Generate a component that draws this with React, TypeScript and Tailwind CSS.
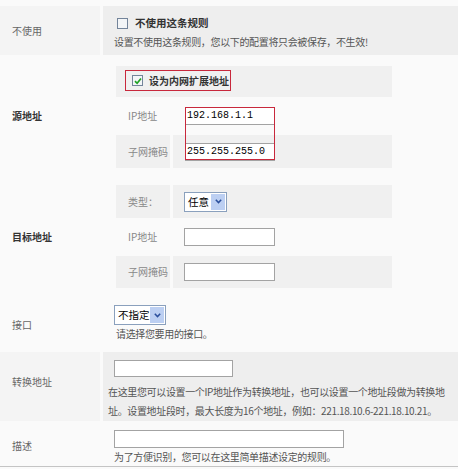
import type { ReactNode } from "react";

function Checkbox({ checked }: { checked?: boolean }) {
  return (
    <span className="inline-flex w-[11px] h-[11px] shrink-0 items-center justify-center border border-[#73849a] bg-[#f3f5f7]">
      {checked && (
        <svg width="8" height="8" viewBox="0 0 8 8">
          <path d="M1 4.2 L3.1 6.3 L7 1.5" stroke="#1fa224" strokeWidth="1.7" fill="none" />
        </svg>
      )}
    </span>
  );
}

function Select({ text, className }: { text: string; className: string }) {
  return (
    <div className={`flex items-center h-[20px] border border-[#8aa0bd] bg-white ${className}`}>
      <span className="pl-[3px] text-[10.5px] leading-[12px] text-black">{text}</span>
      <span className="ml-auto mr-[1px] w-[14px] h-[16px] flex items-center justify-center bg-[#bccff2]">
        <svg width="7" height="5" viewBox="0 0 7 5">
          <path d="M0.8 0.8 L3.5 3.6 L6.2 0.8" stroke="#2b4f9c" strokeWidth="1.5" fill="none" />
        </svg>
      </span>
    </div>
  );
}

function Input({ className, value }: { className: string; value?: string }) {
  return (
    <div
      className={`flex items-center border border-[#a3a3a3] bg-white pl-[1px] font-['Liberation_Mono',monospace] text-[10px] text-black ${className}`}
    >
      {value}
    </div>
  );
}

function SubRow({
  label,
  gray,
  className,
  children,
}: {
  label: string;
  gray?: boolean;
  className: string;
  children: ReactNode;
}) {
  return (
    <div className={`flex ${className}`}>
      <div className={`w-[54px] pl-[12px] flex items-center text-[#888] ${gray ? "bg-[#f0f0f0]" : ""}`}>
        {label}
      </div>
      <div className={`flex-1 ml-[3px] pl-[11px] flex items-center ${gray ? "bg-[#f0f0f0]" : ""}`}>
        {children}
      </div>
    </div>
  );
}

export default function App() {
  return (
    <div className='w-[458px] h-[469px] bg-[#fafafa] pt-[6px] text-[10px] leading-[12px] text-[#666] font-["Noto_Sans_CJK_SC",sans-serif]'>
      {/* 不使用 */}
      <div className="flex h-[49px]">
        <div className="w-[100px] bg-[#f4f4f4] pl-[12px] flex items-center">不使用</div>
        <div className="flex-1 ml-[3px] bg-[#eeeeee] pl-[11px] pt-[11px]">
          <div className="flex items-center gap-[7px] pl-[3px] h-[12px]">
            <Checkbox />
            <span className="font-bold text-[#333] text-[10.5px]">不使用这条规则</span>
          </div>
          <div className="mt-[7px] text-[#555] tracking-[-0.35px]">
            设置不使用这条规则，您以下的配置将只会被保存，不生效!
          </div>
        </div>
      </div>

      {/* 源地址 */}
      <div className="flex h-[119px]">
        <div className="w-[100px] pl-[12px] pt-[55px] font-bold text-[#333]">源地址</div>
        <div className="ml-[3px] pl-[13px] pt-[11px]">
          <div className="relative w-[276px]">
            <div className="h-[31px] bg-[#f0f0f0] pt-[4px] pl-[9px]">
              <div className="flex items-center h-[21px] w-[106px] border border-[#c8283c] pl-[6px] gap-[6px]">
                <Checkbox checked />
                <span className="font-bold text-[#333]">设为内网扩展地址</span>
              </div>
            </div>
            <SubRow label="IP地址" className="h-[38px]">
              <Input className="w-[90px] h-[18px] ml-[1px]" value="192.168.1.1" />
            </SubRow>
            <SubRow label="子网掩码" gray className="h-[33px]">
              <Input className="w-[90px] h-[18px] ml-[1px]" value="255.255.255.0" />
            </SubRow>
            {/* highlight annotation over both inputs */}
            <div className="absolute left-[69px] top-[41px] w-[90px] h-[53px] border border-[#c8283c]" />
          </div>
        </div>
      </div>

      {/* 目标地址 */}
      <div className="flex h-[116px]">
        <div className="w-[100px] pl-[12px] pt-[57px] font-bold text-[#333]">目标地址</div>
        <div className="ml-[3px] pl-[13px] pt-[11px]">
          <div className="w-[276px]">
            <SubRow label="类型：" gray className="h-[33px]">
              <Select text="任意" className="w-[43px]" />
            </SubRow>
            <SubRow label="IP地址" className="h-[38px]">
              <Input className="w-[91px] h-[18px]" />
            </SubRow>
            <SubRow label="子网掩码" gray className="h-[32px]">
              <Input className="w-[91px] h-[18px]" />
            </SubRow>
          </div>
        </div>
      </div>

      {/* 接口 */}
      <div className="flex h-[62px]">
        <div className="w-[100px] pl-[12px] pt-[29px]">接口</div>
        <div className="ml-[3px] pl-[11px] pt-[15px]">
          <Select text="不指定" className="w-[52px]" />
          <div className="mt-[3px] pl-[2px] text-[#555] tracking-[-0.35px]">请选择您要用的接口。</div>
        </div>
      </div>

      {/* 转换地址 */}
      <div className="flex h-[69px]">
        <div className="w-[100px] bg-[#f4f4f4] pl-[12px] pt-[24px]">转换地址</div>
        <div className="flex-1 ml-[3px] bg-[#eeeeee] pl-[5px] pt-[8px]">
          <Input className="ml-[6px] w-[119px] h-[17px]" />
          <div className="mt-[5px] leading-[19px] whitespace-nowrap text-[#555] tracking-[-0.35px]">
            在这里您可以设置一个IP地址作为转换地址，也可以设置一个地址段做为转换地
            <br />
            址。设置地址段时，最大长度为16个地址，例如：221.18.10.6-221.18.10.21。
          </div>
        </div>
      </div>

      {/* 描述 */}
      <div className="flex h-[46px] border-b border-[#c4c4c4]">
        <div className="w-[100px] pl-[12px] pt-[19px]">描述</div>
        <div className="ml-[3px] pl-[11px] pt-[9px]">
          <Input className="w-[230px] h-[18px]" />
          <div className="mt-[3px] text-[#555] tracking-[-0.35px]">
            为了方便识别，您可以在这里简单描述设定的规则。
          </div>
        </div>
      </div>
    </div>
  );
}
